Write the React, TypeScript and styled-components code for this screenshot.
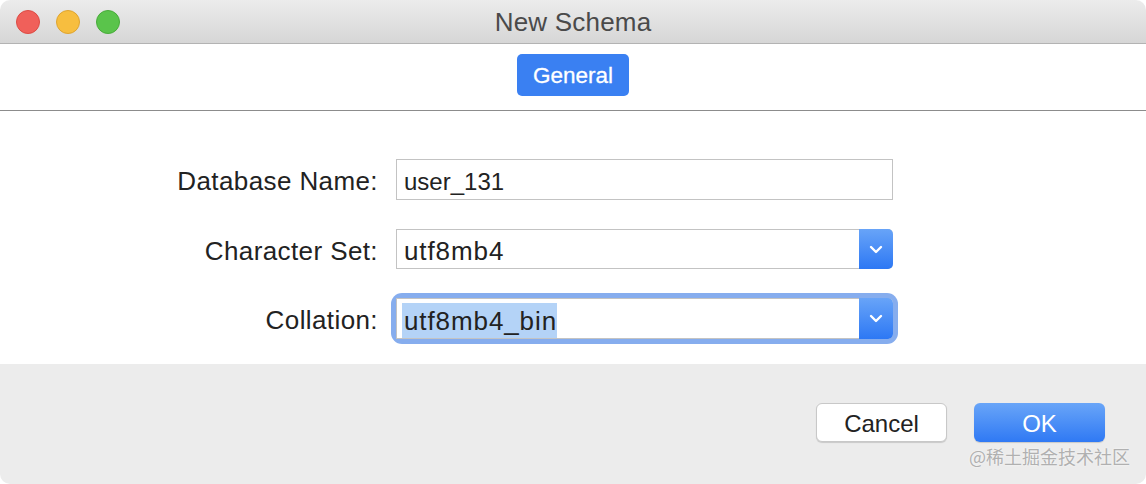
import React from "react";
import styled, { createGlobalStyle } from "styled-components";

const Global = createGlobalStyle`
  html, body { margin: 0; padding: 0; background: #ffffff; }
  body { font-family: "Liberation Sans", Arial, sans-serif; }
  * { box-sizing: border-box; }
`;

const Window = styled.div`
  width: 1146px;
  height: 484px;
  display: flex;
  flex-direction: column;
  background: #ffffff;
  border-radius: 10px;
  overflow: hidden;
  position: relative;
`;

const TitleBar = styled.div`
  height: 44px;
  flex: none;
  display: flex;
  align-items: center;
  justify-content: center;
  position: relative;
  background: linear-gradient(#ececec, #d6d6d6);
  border-bottom: 1px solid #b3b3b3;
`;

const Lights = styled.div`
  position: absolute;
  left: 16px;
  top: 10px;
  display: flex;
  gap: 16px;
`;

const Light = styled.span<{ $c: string; $b: string }>`
  width: 24px;
  height: 24px;
  border-radius: 50%;
  background: ${(p) => p.$c};
  border: 1px solid ${(p) => p.$b};
`;

const Title = styled.div`
  font-size: 26px;
  letter-spacing: 0.2px;
  color: #4a4a4a;
  margin-top: 1px;
`;

const TabBar = styled.div`
  height: 67px;
  flex: none;
  display: flex;
  justify-content: center;
  padding-top: 10px;
  border-bottom: 1px solid #8c8c8c;
`;

const Segment = styled.div`
  width: 112px;
  height: 42px;
  border-radius: 5px;
  background: #3a80f2;
  color: #ffffff;
  font-size: 22.5px;
  display: flex;
  align-items: center;
  justify-content: center;
  padding-top: 2px;
  -webkit-text-stroke: 0.3px #fff;
`;

const FormArea = styled.div`
  height: 253px;
  flex: none;
  padding-top: 48px;
  display: grid;
  grid-template-columns: 377px 497px;
  grid-template-rows: 41px 40px 41px;
  column-gap: 19px;
  row-gap: 29px;
  align-content: start;
`;

const Label = styled.div`
  font-size: 26px;
  letter-spacing: 0.4px;
  color: #222;
  display: flex;
  align-items: center;
  justify-content: flex-end;
  padding-top: 4px;
  margin-right: -1px;
`;

const TextBox = styled.div`
  border: 1px solid #c3c3c3;
  background: #fff;
  font-size: 24px;
  color: #222;
  display: flex;
  align-items: center;
  padding: 4px 0 0 7px;
`;

const SelectWrap = styled.div<{ $focus?: boolean }>`
  position: relative;
  display: flex;
  border-radius: 6px;
  box-shadow: ${(p) => (p.$focus ? "0 0 0 5px #86adee" : "none")};
`;

const SelectBox = styled.div`
  flex: 1;
  display: flex;
  border: 1px solid #c3c3c3;
  border-right: none;
  border-radius: 0 5px 5px 0;
  background: #fff;
`;

const SelectText = styled.div`
  flex: 1;
  font-size: 26px;
  letter-spacing: 0.9px;
  color: #222;
  display: flex;
  align-items: center;
  padding: 4px 0 0 7px;
`;

const Highlight = styled.span`
  background: #b4d3f7;
  padding: 3px 0 1px 2px;
  margin-left: -2px;
`;

const Arrow = styled.div`
  width: 34px;
  margin: -1px 0;
  border-radius: 0 5px 5px 0;
  background: linear-gradient(#68a4f8, #2d78f4);
  display: flex;
  align-items: center;
  justify-content: center;
`;

const Footer = styled.div`
  flex: 1;
  background: #ececec;
  display: flex;
  justify-content: flex-end;
  align-items: flex-start;
  padding: 39px 41px 0 0;
  gap: 27px;
  position: relative;
`;

const Button = styled.div<{ $primary?: boolean }>`
  width: 131px;
  height: 39px;
  border-radius: 6px;
  font-size: 24px;
  display: flex;
  align-items: center;
  justify-content: center;
  padding-top: 2px;
  color: ${(p) => (p.$primary ? "#ffffff" : "#222")};
  background: ${(p) =>
    p.$primary ? "linear-gradient(#69a5f8, #2f79f4)" : "#ffffff"};
  border: ${(p) => (p.$primary ? "none" : "1px solid #c8c8c8")};
  box-shadow: 0 1px 1px rgba(0, 0, 0, 0.15);
`;

const Watermark = styled.div`
  position: absolute;
  right: 16px;
  bottom: 15px;
  font-family: "Noto Sans CJK SC", "Liberation Sans", sans-serif;
  font-size: 18px;
  color: #b0b0b0;
  text-shadow: 0 0 2px #fff;
`;

const Chevron = () => (
  <svg width="14" height="9" viewBox="0 0 14 9">
    <path d="M2 2 L7 7 L12 2" fill="none" stroke="#fff" strokeWidth="2.4" strokeLinecap="round" strokeLinejoin="round" />
  </svg>
);

export default function App() {
  return (
    <>
      <Global />
      <Window>
        <TitleBar>
          <Lights>
            <Light $c="#f0605a" $b="#dc4b44" />
            <Light $c="#f7be3f" $b="#dea430" />
            <Light $c="#5ac44b" $b="#48ab3a" />
          </Lights>
          <Title>New Schema</Title>
        </TitleBar>
        <TabBar>
          <Segment>General</Segment>
        </TabBar>
        <FormArea>
          <Label>Database Name:</Label>
          <TextBox>user_131</TextBox>
          <Label>Character Set:</Label>
          <SelectWrap>
            <SelectBox>
              <SelectText>utf8mb4</SelectText>
              <Arrow>
                <Chevron />
              </Arrow>
            </SelectBox>
          </SelectWrap>
          <Label>Collation:</Label>
          <SelectWrap $focus>
            <SelectBox>
              <SelectText>
                <Highlight>utf8mb4_bin</Highlight>
              </SelectText>
              <Arrow>
                <Chevron />
              </Arrow>
            </SelectBox>
          </SelectWrap>
        </FormArea>
        <Footer>
          <Button>Cancel</Button>
          <Button $primary>OK</Button>
          <Watermark>@稀土掘金技术社区</Watermark>
        </Footer>
      </Window>
    </>
  );
}
